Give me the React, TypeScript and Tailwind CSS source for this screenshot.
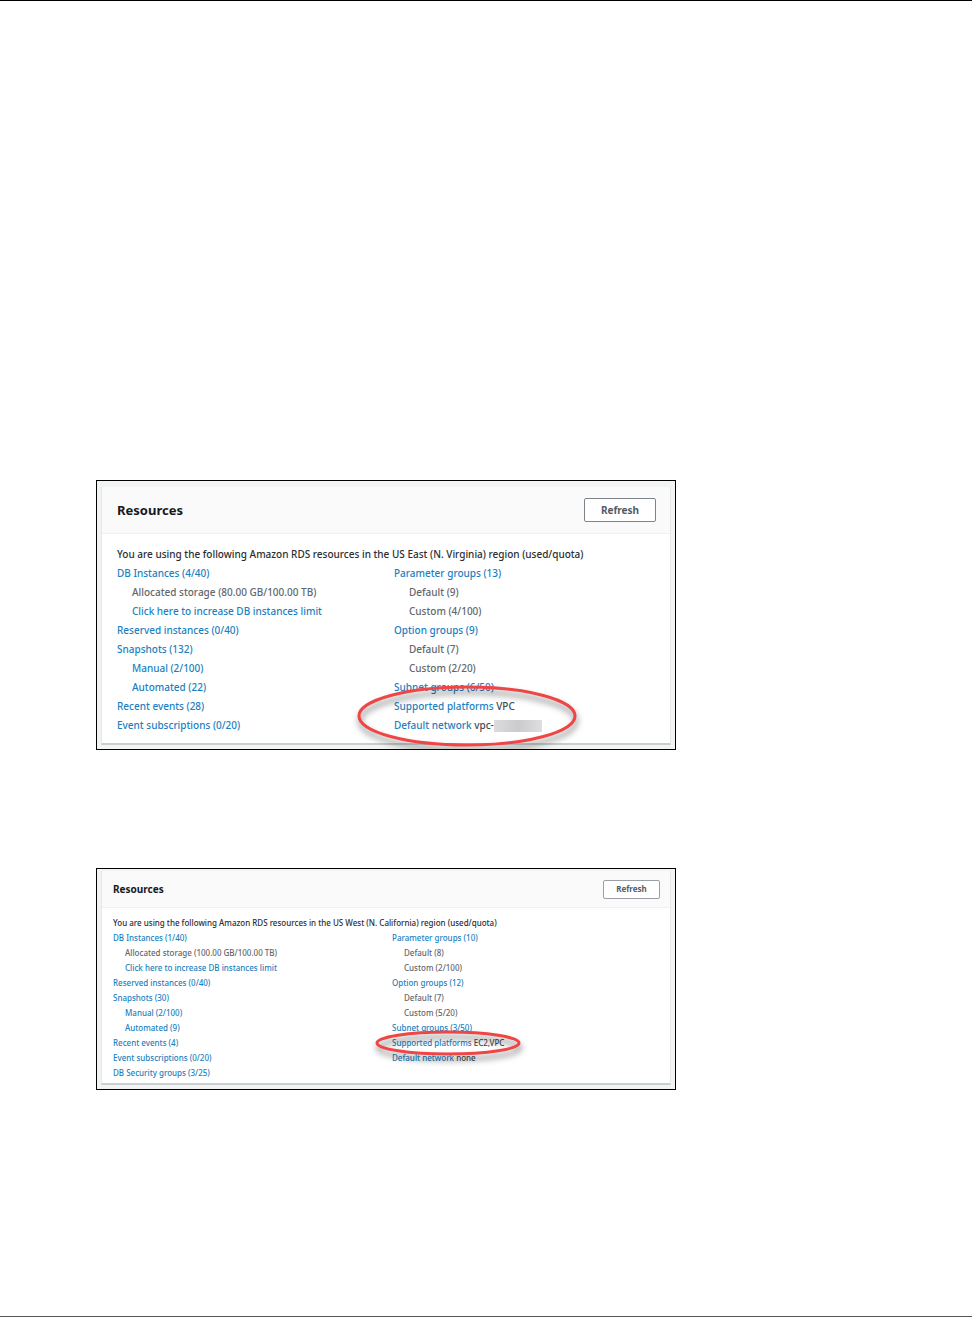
import clsx from "clsx";

type Item = {
  label: string;
  value?: string;
  indent?: boolean;
  plain?: boolean;
  masked?: boolean;
};

type Resources = {
  region: string;
  left: Item[];
  right: Item[];
};

const virginia: Resources = {
  region: "US East (N. Virginia)",
  left: [
    { label: "DB Instances (4/40)" },
    { label: "Allocated storage (80.00 GB/100.00 TB)", indent: true, plain: true },
    { label: "Click here to increase DB instances limit", indent: true },
    { label: "Reserved instances (0/40)" },
    { label: "Snapshots (132)" },
    { label: "Manual (2/100)", indent: true },
    { label: "Automated (22)", indent: true },
    { label: "Recent events (28)" },
    { label: "Event subscriptions (0/20)" },
  ],
  right: [
    { label: "Parameter groups (13)" },
    { label: "Default (9)", indent: true, plain: true },
    { label: "Custom (4/100)", indent: true, plain: true },
    { label: "Option groups (9)" },
    { label: "Default (7)", indent: true, plain: true },
    { label: "Custom (2/20)", indent: true, plain: true },
    { label: "Subnet groups (6/50)" },
    { label: "Supported platforms", value: "VPC" },
    { label: "Default network", value: "vpc-", masked: true },
  ],
};

const california: Resources = {
  region: "US West (N. California)",
  left: [
    { label: "DB Instances (1/40)" },
    { label: "Allocated storage (100.00 GB/100.00 TB)", indent: true, plain: true },
    { label: "Click here to increase DB instances limit", indent: true },
    { label: "Reserved instances (0/40)" },
    { label: "Snapshots (30)" },
    { label: "Manual (2/100)", indent: true },
    { label: "Automated (9)", indent: true },
    { label: "Recent events (4)" },
    { label: "Event subscriptions (0/20)" },
    { label: "DB Security groups (3/25)" },
  ],
  right: [
    { label: "Parameter groups (10)" },
    { label: "Default (8)", indent: true, plain: true },
    { label: "Custom (2/100)", indent: true, plain: true },
    { label: "Option groups (12)" },
    { label: "Default (7)", indent: true, plain: true },
    { label: "Custom (5/20)", indent: true, plain: true },
    { label: "Subnet groups (3/50)" },
    { label: "Supported platforms", value: "EC2,VPC" },
    { label: "Default network", value: "none" },
  ],
};

const ItemList = ({ items, small }: { items: Item[]; small?: boolean }) => (
  <ul>
    {items.map((item, index) => (
      <li
        key={index}
        className={clsx("whitespace-nowrap", item.indent && (small ? "pl-3" : "pl-[15px]"))}
      >
        {item.plain ? (
          <span className="text-[#62676d]">{item.label}</span>
        ) : (
          <a href="#" className="text-[#1c7fc0]">{item.label}</a>
        )}
        {item.value && <span> {item.value}</span>}
        {item.masked && (
          <span className="inline-block h-3 w-12 bg-linear-to-r from-[#dcdcde] via-[#cbcbce] to-[#dedee0] align-middle" />
        )}
      </li>
    ))}
  </ul>
);

// Red marker ring drawn over the platform rows
const Ring = ({ small }: { small?: boolean }) =>
  small ? (
    <svg
      className="pointer-events-none absolute -left-5 top-[95px] overflow-visible drop-shadow-[1px_5px_3px_rgba(0,0,0,0.5)]"
      width="152"
      height="36"
      aria-hidden="true"
    >
      <ellipse cx="76" cy="18" rx="71" ry="11" fill="none" stroke="#f04545" strokeWidth="3" />
    </svg>
  ) : (
    <svg
      className="pointer-events-none absolute -left-10 top-[117px] overflow-visible drop-shadow-[1px_5px_3px_rgba(0,0,0,0.5)]"
      width="226"
      height="70"
      aria-hidden="true"
    >
      <ellipse cx="113" cy="35" rx="108" ry="29" fill="none" stroke="#f04545" strokeWidth="3" />
    </svg>
  );

const ResourcesCard = ({ data, small }: { data: Resources; small?: boolean }) => (
  <section
    className={clsx(
      "overflow-hidden border border-black bg-[#f2f3f3] px-1 pb-1 font-medium",
      small ? "pt-0.5 text-[8px] leading-[15px]" : "pt-1.5 text-[10px] leading-[19px]"
    )}
  >
    <div className="border-x border-b-2 border-x-[#e4e7e7] border-b-[#c9cfd0] bg-white">
      <div
        className={clsx(
          "flex items-center justify-between border-b border-[#eff0f0] bg-[#fafafa]",
          small ? "h-[37px] pl-[11px] pr-2.5" : "h-[47px] pl-[15px] pr-3.5"
        )}
      >
        <h2 className={clsx("font-bold text-[#16191f]", small ? "text-[10px]" : "text-[13px]")}>
          Resources
        </h2>
        <button
          type="button"
          className={clsx(
            "rounded-xs border bg-white font-bold leading-none text-[#545b64]",
            small ? "h-[19px] w-[57px] border-[#9a9fa6]" : "h-6 w-[72px] border-[#7d838b]"
          )}
        >
          Refresh
        </button>
      </div>
      <div className={clsx(small ? "px-[11px] pb-[3px] pt-[7px]" : "px-[15px] pb-2 pt-[11px]")}>
        <p className="text-[#2b2e33]">
          You are using the following Amazon RDS resources in the {data.region} region (used/quota)
        </p>
        <div className={clsx("grid grid-cols-2 text-[#444950]", small ? "gap-3" : "gap-4")}>
          <ItemList items={data.left} small={small} />
          <div className="relative">
            <ItemList items={data.right} small={small} />
            <Ring small={small} />
          </div>
        </div>
      </div>
    </div>
  </section>
);

export default function App() {
  return (
    <div className="flex min-h-screen flex-col border-b border-t border-b-[#555555] border-t-black bg-white px-24 pt-[479px] font-['Noto_Sans',sans-serif]">
      <main className="flex w-full max-w-[580px] flex-col gap-[118px]">
        <ResourcesCard data={virginia} />
        <ResourcesCard data={california} small />
      </main>
    </div>
  );
}
